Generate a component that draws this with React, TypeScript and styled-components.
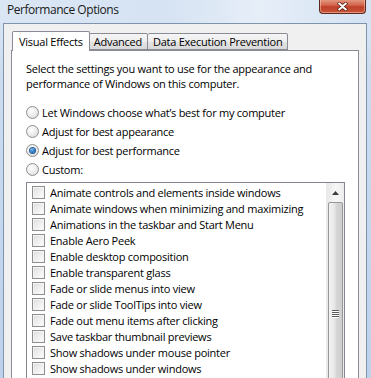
import React from "react";
import styled, { createGlobalStyle } from "styled-components";

const GlobalStyle = createGlobalStyle`
  html, body {
    margin: 0;
    padding: 0;
    width: 371px;
    height: 378px;
    overflow: hidden;
  }
  body {
    font-family: "Open Sans", "Noto Sans", sans-serif;
    font-size: 11px;
    letter-spacing: -0.25px;
    color: #000;
  }
`;

const Window = styled.div`
  width: 371px;
  height: 378px;
  display: flex;
  flex-direction: column;
  background: linear-gradient(180deg, #dde8f5 0%, #cbdcf0 20%, #bcd2ec 100%);
  overflow: hidden;
`;

const TitleBar = styled.div`
  height: 23px;
  flex: none;
  display: flex;
  align-items: flex-start;
  justify-content: space-between;
  padding: 0 5px 0 7px;
  background: linear-gradient(90deg, #dae6f4 0%, #d6e3f3 45%, #e6eef8 70%, #d4e2f3 100%);
`;

const Title = styled.span`
  font-size: 12px;
  color: #1a1a1a;
  line-height: 19px;
  letter-spacing: -0.45px;
`;

const CloseButton = styled.div`
  width: 45px;
  height: 14px;
  margin-top: -1px;
  border: 1px solid #5a2a20;
  border-top: none;
  border-radius: 0 0 4px 4px;
  background: linear-gradient(180deg, #e7a08a 0%, #d1634a 45%, #c0402a 55%, #c9553b 100%);
  display: flex;
  align-items: center;
  justify-content: center;
  box-shadow: inset 0 0 0 1px rgba(255, 210, 190, 0.5);
`;

const Body = styled.div`
  flex: 1;
  margin: 0 4px 0 3px;
  border: 1px solid #7f93ab;
  border-bottom: none;
  background: #f0f0f0;
  padding: 7px 7px 0 7px;
  display: flex;
  flex-direction: column;
  min-height: 0;
`;

const TabStrip = styled.div`
  display: flex;
  align-items: flex-end;
  height: 19px;
  flex: none;
  padding-left: 1px;
  position: relative;
  z-index: 1;
`;

const Tab = styled.div<{ $active?: boolean }>`
  height: ${(p) => (p.$active ? 20 : 17)}px;
  box-sizing: border-box;
  padding: 0 ${(p) => (p.$active ? 6 : 5)}px;
  margin: ${(p) => (p.$active ? "0 -1px -1px 0" : "0")};
  border: 1px solid #898c95;
  border-bottom: ${(p) => (p.$active ? "none" : "1px solid #898c95")};
  border-left-width: ${(p) => (p.$active ? 1 : 0)}px;
  border-radius: 2px 2px 0 0;
  background: ${(p) =>
    p.$active
      ? "#ffffff"
      : "linear-gradient(180deg, #f5f5f5 0%, #eeeeee 50%, #e3e3e3 51%, #d9d9d9 100%)"};
  display: flex;
  align-items: center;
  white-space: nowrap;
  line-height: 15px;
  position: relative;
  z-index: ${(p) => (p.$active ? 2 : 1)};

  &:nth-child(2) {
    border-left-width: 0;
  }
`;

const Panel = styled.div`
  flex: 1;
  background: #ffffff;
  border: 1px solid #898c95;
  border-bottom: none;
  padding: 10px 13px 0 14px;
  display: flex;
  flex-direction: column;
  min-height: 0;
`;

const Intro = styled.p`
  margin: 0 0 12px 0;
  line-height: 15px;
  flex: none;
`;

const RadioRow = styled.label`
  display: flex;
  align-items: center;
  flex: none;
  height: 19px;
  gap: 3px;
`;

const RadioDot = styled.span<{ $checked?: boolean }>`
  width: 13px;
  height: 13px;
  box-sizing: border-box;
  border-radius: 50%;
  border: 1px solid #8f8f8f;
  background: radial-gradient(circle at 40% 35%, #ffffff 0%, #eaeaea 55%, #d2d2d2 100%);
  display: flex;
  align-items: center;
  justify-content: center;
  flex: none;

  &::after {
    content: "";
    display: ${(p) => (p.$checked ? "block" : "none")};
    width: 5px;
    height: 5px;
    border-radius: 50%;
    background: radial-gradient(circle at 40% 35%, #7fc1ef 0%, #1b6fb8 60%, #0c4c8c 100%);
    box-shadow: 0 0 0 1px #2a5f99;
  }
`;

const ListBox = styled.div`
  margin-top: 3px;
  flex: none;
  height: 230px;
  border: 1px solid #828790;
  display: flex;
  background: #fff;
`;

const Items = styled.div`
  flex: 1;
  padding: 1px 0 0 5px;
  display: flex;
  flex-direction: column;
  overflow: hidden;
`;

const ItemRow = styled.label`
  display: flex;
  align-items: center;
  flex: none;
  height: 16px;
  gap: 5px;
  white-space: nowrap;
`;

const CheckBox = styled.span`
  width: 13px;
  height: 13px;
  box-sizing: border-box;
  border: 1px solid #8e8f8f;
  background: linear-gradient(135deg, #dcdcdc 0%, #f2f2f2 60%, #ffffff 100%);
  box-shadow: inset 0 0 0 1px #f4f4f4;
  flex: none;
`;

const ScrollBar = styled.div`
  width: 17px;
  flex: none;
  display: flex;
  flex-direction: column;
  align-items: center;
  background: linear-gradient(90deg, #e8e8e8 0%, #f7f7f7 50%, #ededed 100%);
  border-left: 1px solid #eaeaea;
`;

const ArrowButton = styled.div`
  height: 19px;
  width: 100%;
  flex: none;
  display: flex;
  align-items: center;
  justify-content: center;
`;

const Thumb = styled.div`
  width: 15px;
  flex: 1;
  box-sizing: border-box;
  border: 1px solid #979797;
  border-radius: 2px;
  background: linear-gradient(90deg, #f3f3f3 0%, #e6e6e6 45%, #d6d6d6 55%, #cfcfcf 100%);
  display: flex;
  justify-content: center;
  padding-top: 107px;
`;

const Grip = styled.div`
  display: flex;
  flex-direction: column;
`;

const GripLine = styled.span`
  display: block;
  width: 7px;
  height: 1px;
  background: #5b5b5b;
  box-shadow: 0 1px 0 #ffffff;
  margin-bottom: 1px;
`;

const items = [
  "Animate controls and elements inside windows",
  "Animate windows when minimizing and maximizing",
  "Animations in the taskbar and Start Menu",
  "Enable Aero Peek",
  "Enable desktop composition",
  "Enable transparent glass",
  "Fade or slide menus into view",
  "Fade or slide ToolTips into view",
  "Fade out menu items after clicking",
  "Save taskbar thumbnail previews",
  "Show shadows under mouse pointer",
  "Show shadows under windows",
];

const radios = [
  { label: "Let Windows choose what\u2019s best for my computer", checked: false },
  { label: "Adjust for best appearance", checked: false },
  { label: "Adjust for best performance", checked: true },
  { label: "Custom:", checked: false },
];

export default function App() {
  return (
    <>
      <GlobalStyle />
      <Window>
        <TitleBar>
          <Title>Performance Options</Title>
          <CloseButton>
            <svg width="11" height="9" viewBox="0 0 11 9">
              <path
                d="M1 0.5 L5.5 4 L10 0.5 M1 8.5 L5.5 5 L10 8.5"
                stroke="#5a1e12"
                strokeWidth="3.4"
                fill="none"
              />
              <path
                d="M1.5 1 L5.5 4.3 L9.5 1 M1.5 8 L5.5 4.7 L9.5 8"
                stroke="#ffffff"
                strokeWidth="2"
                fill="none"
              />
            </svg>
          </CloseButton>
        </TitleBar>
        <Body>
          <TabStrip>
            <Tab $active>Visual Effects</Tab>
            <Tab>Advanced</Tab>
            <Tab>Data Execution Prevention</Tab>
          </TabStrip>
          <Panel>
            <Intro>
              Select the settings you want to use for the appearance and
              <br />
              performance of Windows on this computer.
            </Intro>
            {radios.map((r) => (
              <RadioRow key={r.label}>
                <RadioDot $checked={r.checked} />
                {r.label}
              </RadioRow>
            ))}
            <ListBox>
              <Items>
                {items.map((it) => (
                  <ItemRow key={it}>
                    <CheckBox />
                    {it}
                  </ItemRow>
                ))}
              </Items>
              <ScrollBar>
                <ArrowButton>
                  <svg width="7" height="4" viewBox="0 0 7 4">
                    <path d="M0 4 L3.5 0 L7 4 Z" fill="#3c3c3c" />
                  </svg>
                </ArrowButton>
                <Thumb>
                  <Grip>
                    <GripLine />
                    <GripLine />
                    <GripLine />
                    <GripLine />
                  </Grip>
                </Thumb>
              </ScrollBar>
            </ListBox>
          </Panel>
        </Body>
      </Window>
    </>
  );
}
